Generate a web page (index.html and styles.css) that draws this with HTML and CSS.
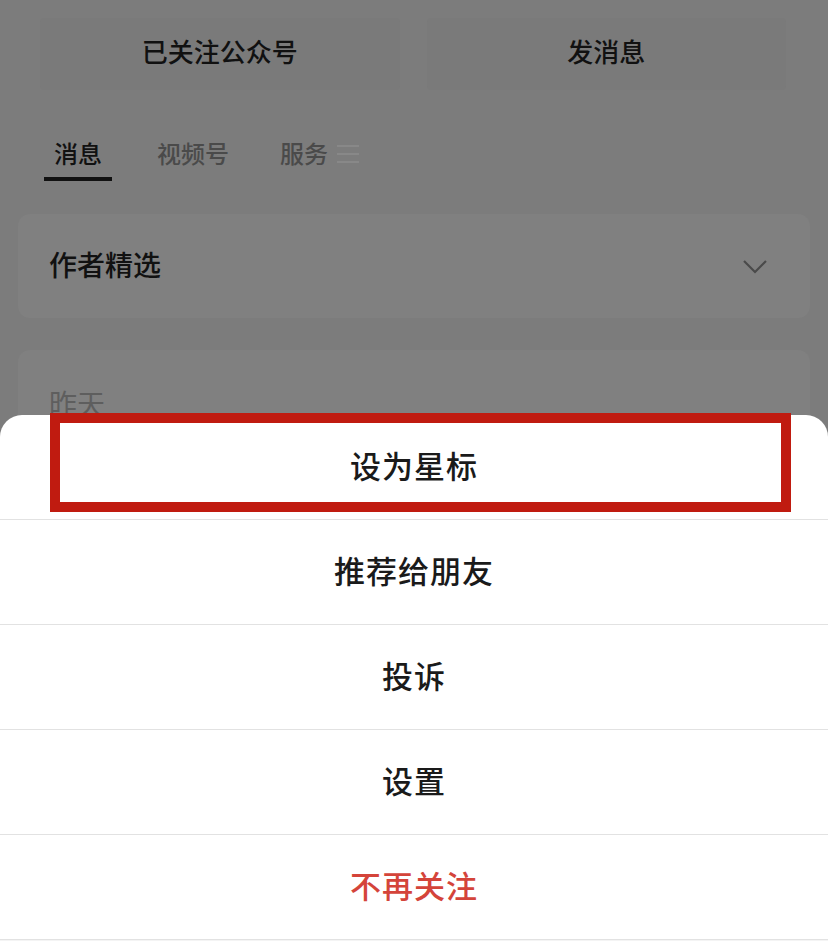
FILE: index.html
```html
<!DOCTYPE html>
<html lang="zh">
<head>
<meta charset="utf-8">
<link rel="stylesheet" href="styles.css">
</head>
<body>
<div class="page">
  <div class="actions">
    <div class="btn">已关注公众号</div>
    <div class="btn">发消息</div>
  </div>
  <div class="tabs">
    <div class="tab active">消息</div>
    <div class="tab">视频号</div>
    <div class="tab">服务<span class="menu"><i></i><i></i><i></i></span></div>
  </div>
  <div class="card card-pick">
    <span class="card-title">作者精选</span>
    <svg class="chev" width="26" height="16" viewBox="0 0 26 16"><polyline points="2,2 13,13 24,2" fill="none" stroke="#4a4a4a" stroke-width="2.2"/></svg>
  </div>
  <div class="card card-day">
    <span class="day">昨天</span>
  </div>
</div>
<div class="sheet">
  <div class="item">设为星标</div>
  <div class="item">推荐给朋友</div>
  <div class="item">投诉</div>
  <div class="item">设置</div>
  <div class="item danger">不再关注</div>
  <div class="foot"></div>
</div>
<div class="mark"></div>
</body>
</html>
```
FILE: styles.css
```css
html, body {
  margin: 0;
  padding: 0;
}
body {
  width: 828px;
  height: 941px;
  overflow: hidden;
  background: #7c7c7c;
  font-family: "Noto Sans CJK SC", "Noto Sans", sans-serif;
  position: relative;
}
.page {
  display: flex;
  flex-direction: column;
}
.actions {
  display: flex;
  gap: 27px;
  padding: 18px 42px 0 40px;
}
.btn {
  flex: 1;
  height: 72px;
  box-sizing: border-box;
  padding-bottom: 7px;
  background: #7a7a7a;
  display: flex;
  align-items: center;
  justify-content: center;
  font-size: 26px;
  font-weight: 500;
  color: #111;
  border-radius: 4px;
}
.tabs {
  display: flex;
  align-items: flex-start;
  padding: 0 0 0 44px;
}
.tab {
  font-size: 24px;
  font-weight: 500;
  color: #4a4a4a;
  padding: 45px 10px 0;
  height: 46px;
  margin-right: 35px;
  display: flex;
  align-items: flex-start;
  line-height: 36px;
}
.tab.active {
  color: #111;
  border-bottom: 4px solid #111;
  height: 42px;
}
.tab:nth-child(3) {
  padding-left: 6px;
}
.menu {
  display: flex;
  flex-direction: column;
  gap: 6px;
  margin: 10px 0 0 9px;
  width: 22px;
}
.menu i {
  display: block;
  height: 2px;
  background: #888;
}
.card {
  margin: 0 18px;
  background: #808080;
  border-radius: 12px;
}
.card-pick {
  margin-top: 33px;
  height: 104px;
  box-sizing: border-box;
  padding: 0 42px 4px 31px;
  display: flex;
  align-items: center;
  justify-content: space-between;
}
.card-title {
  font-size: 28px;
  font-weight: 500;
  color: #111;
}
.chev {
  margin-top: 6px;
}
.card-day {
  margin-top: 32px;
  height: 300px;
  padding: 33px 31px 0;
}
.day {
  font-size: 28px;
  color: #5e5e5e;
}
.sheet {
  position: absolute;
  left: 0;
  right: 0;
  top: 415px;
  bottom: 0;
  background: #fff;
  border-radius: 22px 22px 0 0;
  display: flex;
  flex-direction: column;
}
.item {
  height: 105px;
  flex: none;
  box-sizing: border-box;
  padding-bottom: 6px;
  border-bottom: 1px solid #e2e2e2;
  display: flex;
  align-items: center;
  justify-content: center;
  font-size: 31px;
  font-weight: 500;
  line-height: 1;
  color: #1a1a1a;
  letter-spacing: 1px;
}
.item.danger {
  color: #d4443a;
}
.foot {
  flex: 1;
  background: #f4f4f4;
}
.mark {
  position: absolute;
  left: 50px;
  top: 413px;
  width: 741px;
  height: 99px;
  box-sizing: border-box;
  border: 10px solid #c01b10;
}
```
